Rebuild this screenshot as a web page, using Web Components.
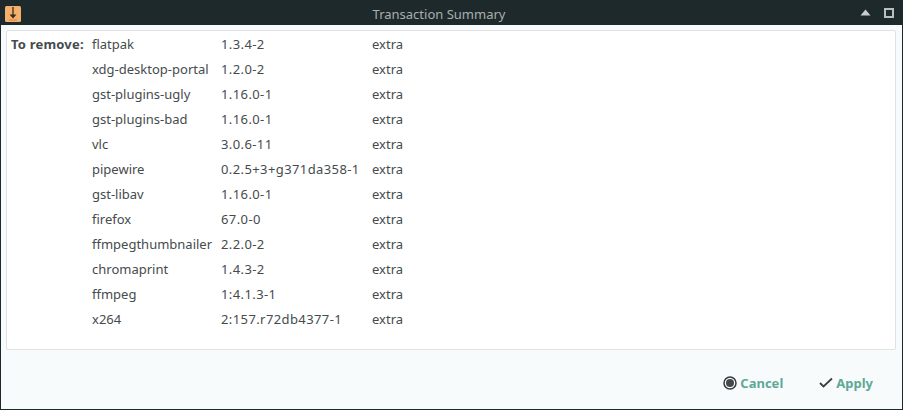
<!DOCTYPE html>
<html>
<head>
<meta charset="utf-8">
<title>Transaction Summary</title>
<style>
  html, body { margin: 0; height: 100%; }
  body { font-family: "Noto Sans", sans-serif; font-size: 13px; }
</style>
</head>
<body>
<summary-window title="Transaction Summary">
  <package-list label="To remove:">
    <package-row name="flatpak" version="1.3.4-2" repo="extra"></package-row>
    <package-row name="xdg-desktop-portal" version="1.2.0-2" repo="extra"></package-row>
    <package-row name="gst-plugins-ugly" version="1.16.0-1" repo="extra"></package-row>
    <package-row name="gst-plugins-bad" version="1.16.0-1" repo="extra"></package-row>
    <package-row name="vlc" version="3.0.6-11" repo="extra"></package-row>
    <package-row name="pipewire" version="0.2.5+3+g371da358-1" repo="extra"></package-row>
    <package-row name="gst-libav" version="1.16.0-1" repo="extra"></package-row>
    <package-row name="firefox" version="67.0-0" repo="extra"></package-row>
    <package-row name="ffmpegthumbnailer" version="2.2.0-2" repo="extra"></package-row>
    <package-row name="chromaprint" version="1.4.3-2" repo="extra"></package-row>
    <package-row name="ffmpeg" version="1:4.1.3-1" repo="extra"></package-row>
    <package-row name="x264" version="2:157.r72db4377-1" repo="extra"></package-row>
  </package-list>
  <dialog-button slot="actions" icon="cancel" style="margin-right:36px">Cancel</dialog-button>
  <dialog-button slot="actions" icon="apply">Apply</dialog-button>
</summary-window>

<script>
customElements.define('summary-window',
  class extends HTMLElement {
    constructor() {
      super();
      let shadowRoot = this.attachShadow({mode: 'open'});
      shadowRoot.innerHTML = `
      <style>
      :host {
        display: flex;
        flex-direction: column;
        width: 903px;
        height: 410px;
        box-sizing: border-box;
        background: #f8fbfc;
        border: solid #1e292b;
        border-width: 0 1px 1px 1px;
      }
      header {
        flex: none;
        height: 25px;
        margin: 0 -1px;
        padding: 0 9px 0 5px;
        display: flex;
        align-items: center;
        background: #1e292b;
        color: #a9aeaf;
        font-size: 13px;
      }
      .app { flex: none; display: block; margin-top: 2px; }
      h1 {
        flex: 1;
        margin: 0 3px 0 0;
        font: inherit;
        text-align: center;
        padding-top: 2px;
      }
      .controls { display: flex; align-items: center; gap: 13px; }
      .controls svg { display: block; }
      main {
        flex: 1;
        min-height: 0;
        display: flex;
        padding: 5px 6px 0 5px;
      }
      footer {
        flex: none;
        height: 59px;
        box-sizing: border-box;
        padding: 7px 29px 0 0;
        display: flex;
        justify-content: flex-end;
        align-items: center;
      }
      </style>
      <header>
        <svg class="app" width="16" height="16" viewBox="0 0 16 16">
          <rect width="16" height="16" rx="1.5" fill="#f2b06c"/>
          <path d="M8 1v10" stroke="#3a2a1c" stroke-width="1.3"/>
          <path d="M4.5 8.5h7L8 12.5z" fill="#3a2a1c"/>
          <path d="M4 14h8" stroke="#c98a4c" stroke-width="1"/>
        </svg>
        <h1></h1>
        <div class="controls">
          <svg width="11" height="7" viewBox="0 0 11 7"><path d="M5.5 0.5L10.5 6.5H0.5z" fill="#c9cdce"/></svg>
          <svg width="10" height="10" viewBox="0 0 10 10"><rect x="1" y="1" width="8" height="8" fill="none" stroke="#b9bebf" stroke-width="2"/></svg>
        </div>
      </header>
      <main><slot></slot></main>
      <footer><slot name="actions"></slot></footer>
      `;
    }
    connectedCallback() {
      this.shadowRoot.querySelector('h1').textContent = this.getAttribute('title');
    }
  }
);

customElements.define('package-list',
  class extends HTMLElement {
    constructor() {
      super();
      let shadowRoot = this.attachShadow({mode: 'open'});
      shadowRoot.innerHTML = `
      <style>
      :host {
        display: flex;
        flex: 1;
        box-sizing: border-box;
        background: #fff;
        border: 1px solid #dfe1e2;
        border-radius: 2px;
        padding: 1px 0 0 4px;
        color: #454b4d;
        font-size: 13px;
      }
      .label {
        flex: none;
        width: 81px;
        height: 25px;
        line-height: 25px;
        font-weight: bold;
        letter-spacing: .2px;
      }
      .rows { display: flex; flex-direction: column; }
      </style>
      <div class="label"></div>
      <div class="rows"><slot></slot></div>
      `;
    }
    connectedCallback() {
      this.shadowRoot.querySelector('.label').textContent = this.getAttribute('label');
    }
  }
);

customElements.define('package-row',
  class extends HTMLElement {
    constructor() {
      super();
      let shadowRoot = this.attachShadow({mode: 'open'});
      shadowRoot.innerHTML = `
      <style>
      :host {
        display: grid;
        grid-template-columns: 129px 151px auto;
        height: 25px;
        line-height: 25px;
        white-space: nowrap;
      }
      /* digits come out wider in the reference */
      .version { letter-spacing: .4px; }
      </style>
      <span class="name"></span><span class="version"></span><span class="repo"></span>
      `;
    }
    connectedCallback() {
      for (let key of ['name', 'version', 'repo']) {
        this.shadowRoot.querySelector('.' + key).textContent = this.getAttribute(key);
      }
    }
  }
);

customElements.define('dialog-button',
  class extends HTMLElement {
    constructor() {
      super();
      let shadowRoot = this.attachShadow({mode: 'open'});
      shadowRoot.innerHTML = `
      <style>
      :host {
        display: inline-flex;
        align-items: center;
        gap: 3px;
        color: #5fa897;
        font-weight: bold;
        font-size: 13px;
        cursor: default;
      }
      </style>
      <span class="icon"></span><slot></slot>
      `;
    }
    connectedCallback() {
      let icons = {
        cancel: `<svg width="14" height="14" viewBox="0 0 14 14" style="display:block">
          <circle cx="7" cy="7" r="6" fill="none" stroke="#33393b" stroke-width="1.5"/>
          <circle cx="7" cy="7" r="4" fill="#43494b"/></svg>`,
        apply: `<svg width="14" height="14" viewBox="0 0 14 14" style="display:block">
          <path d="M1 7L4.5 10.5L13 2.5" fill="none" stroke="#3a4042" stroke-width="1.8"/></svg>`
      };
      this.shadowRoot.querySelector('.icon').innerHTML = icons[this.getAttribute('icon')];
    }
  }
);
</script>
</body>
</html>
